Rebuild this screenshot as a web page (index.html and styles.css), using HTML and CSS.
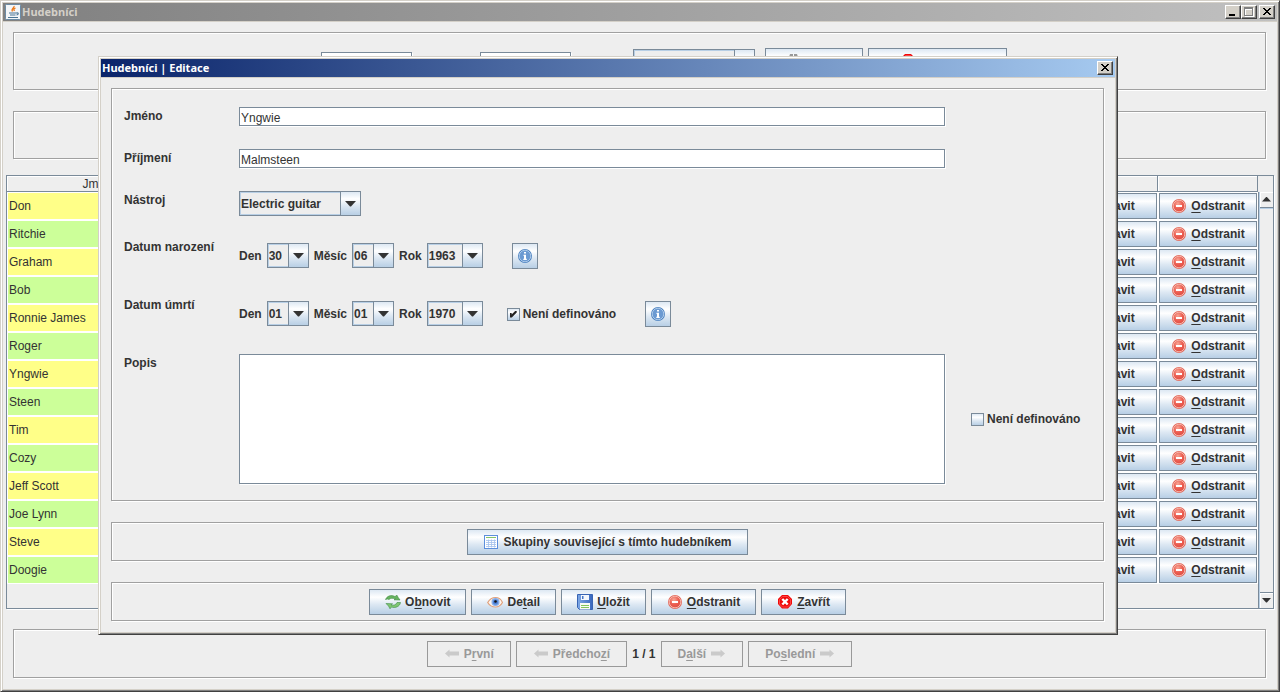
FILE: index.html
```html
<!DOCTYPE html>
<html lang="cs">
<head>
<meta charset="utf-8">
<title>Hudebníci</title>
<link rel="stylesheet" href="styles.css">
</head>
<body>
<svg class="sprite" aria-hidden="true">
  <defs>
    <radialGradient id="red" cx="0.4" cy="0.3" r="0.8"><stop offset="0" stop-color="#f7a595"/><stop offset="0.5" stop-color="#ec5f52"/><stop offset="1" stop-color="#dd4a40"/></radialGradient>
    <linearGradient id="disk" x1="0" x2="1"><stop offset="0" stop-color="#7fa9e6"/><stop offset="1" stop-color="#3766bd"/></linearGradient>
  </defs>
  <symbol id="i-minus" viewBox="0 0 16 16">
    <circle cx="8" cy="8" r="7" fill="#e2685a"/><circle cx="8" cy="8" r="5.8" fill="url(#red)" stroke="#f6b3a8" stroke-width="1"/>
    <rect x="5" y="7" width="6" height="2" fill="#fff"/>
  </symbol>
  <symbol id="i-close" viewBox="0 0 16 16">
    <path d="M5 1h6l4 4v5l-4 4.500H5L1 10V5z" fill="#f00a0a"/><path d="M5.500 2.500h5l3 3v4.500l-3 3h-5l-3-3V5.500z" fill="none" stroke="#ff5a5a" stroke-width=".7"/>
    <path d="M5.300 5l5.400 5.500M10.700 5l-5.400 5.500" stroke="#fff" stroke-width="2.400"/>
  </symbol>
  <symbol id="i-refresh" viewBox="0 0 16 16">
    <path d="M.5 5.500C2 2 6 .5 10 2.500L12 1.200l1 2 2 2.800-6-.2L10.500 5C8 4 5.500 4 4 5.500L2.500 5z" fill="#67b45f" stroke="#3e8a44" stroke-width=".6"/>
    <path d="M15.500 8.500C15 12.500 10 14.500 6.500 13L5 14.800 3.500 12 1 9.500l6.500.3L6 11c3 .5 5 0 6-2.500z" fill="#7fc772" stroke="#3e8a44" stroke-width=".6"/>
  </symbol>
  <symbol id="i-eye" viewBox="0 0 16 16">
    <path d="M.7 8.500C3 4.500 6 3.500 8.500 3.500S14 5 15.500 8.500C13.500 12 11 13 8.500 13S3 12.500.7 8.500z" fill="#fdf6f0" stroke="#e0a17c" stroke-width="1.200"/>
    <circle cx="8.500" cy="8" r="4" fill="#86aee8"/><circle cx="8.500" cy="8" r="2.600" fill="#4f82d8"/><circle cx="8.500" cy="7.500" r="1.300" fill="#111"/>
  </symbol>
  <symbol id="i-save" viewBox="0 0 16 16">
    <path d="M.5.500h15v15h-13l-2-2z" fill="url(#disk)" stroke="#3864b4"/>
    <path d="M4 1h8v5H4z" fill="#f3f7fd"/><path d="M5 2h1.500v3H5z" fill="#4775c6"/>
    <path d="M3 9h10v6.500H3z" fill="#f8fbf4"/><path d="M4 11.500h8M4 13.500h8" stroke="#83c55c"/>
  </symbol>
  <symbol id="i-grid" viewBox="0 0 16 16">
    <rect x="1.500" y="1.500" width="13" height="13" fill="#fff" stroke="#5c8fdc"/>
    <path d="M3 3.500h10" stroke="#86c36b"/>
    <path d="M3 6.500h10M3 8.500h10M3 10.500h10M3 12.500h10" stroke="#b4cdf0"/><path d="M5.500 5.500v8M8.500 5.500v8M11.500 5.500v8" stroke="#a5c2ee" stroke-width=".8"/>
  </symbol>
  <symbol id="i-info" viewBox="0 0 16 16">
    <circle cx="8" cy="8" r="7" fill="#4a80c0"/><circle cx="8" cy="8" r="5.800" fill="#6b9ad2" stroke="#b6d0ec" stroke-width=".9"/>
    <path d="M7 4h2v1.600H7zM6.500 6.800H9v4h.8V12H6.300v-1.200H7V8h-.5z" fill="#fff"/>
  </symbol>
  <symbol id="i-left" viewBox="0 0 16 16"><path d="M1 7.500L5.500 3.500V5.500H15v4H5.500v2z" fill="#cacaca"/></symbol>
  <symbol id="i-right" viewBox="0 0 16 16"><path d="M15 7.500L10.500 3.500V5.500H1v4h9.500v2z" fill="#cacaca"/></symbol>
  <symbol id="i-find" viewBox="0 0 16 16"><path d="M4 1h3v3h1V1h3l3 9v4H9v-4H7v4H1v-4z" fill="#999"/></symbol>
  <symbol id="i-edit" viewBox="0 0 16 16"><path d="M2 14l1-4 8-8 3 3-8 8z" fill="#e6b04a" stroke="#9a6a20"/></symbol>
  <symbol id="i-java" viewBox="0 0 16 16">
    <rect x=".5" y=".5" width="15" height="15" rx="1" fill="#f3f6f8" stroke="#6b8ba4"/>
    <path d="M9 2c1 1.500-3.500 3-1.500 5.500M10.500 4c-2 1-2 1.500-1 3" fill="none" stroke="#ec7a1c" stroke-width="1.300"/>
    <path d="M4 9h7.500M5 11h5.500M3 13.500h10M11.500 9c2.500-.5 2 1.800 0 2" fill="none" stroke="#4a7594" stroke-width="1.200"/>
  </symbol>
  <symbol id="w-close" viewBox="0 0 12 10"><path d="M2 1h2v1h1v1h2V2h1V1h2v1H9v1H8v1H7v1h1v1h1v1h1v1H8V7H7V6H5v1H4v1H2V7h1V6h1V5h1V4H4V3H3V2H2z" fill="#000"/></symbol>
  <symbol id="w-min" viewBox="0 0 12 10"><path d="M2 7h6v2H2z" fill="#000"/></symbol>
  <symbol id="w-max" viewBox="0 0 12 10"><path d="M2 1h9v9H2z" fill="#fff"/><path d="M1 0h9v9H1zM2 2v6h7V2z" fill="#808080" fill-rule="evenodd"/><path d="M3 3h6v5H3z" fill="#d4d0c8"/></symbol>
  <symbol id="i-down" viewBox="0 0 11 6"><path d="M0 0h11L6 5.500H5z" fill="#333"/></symbol>
  <symbol id="i-up" viewBox="0 0 11 6"><path d="M0 5.500h11L6 0H5z" fill="#333"/></symbol>
</svg>

<main class="window main-window">
  <header class="titlebar inactive">
    <svg class="icon"><use href="#i-java"/></svg>
    <h1 class="title">Hudebníci</h1>
    <div class="window-buttons">
      <button class="wbtn" aria-label="Minimalizovat"><svg><use href="#w-min"/></svg></button>
      <button class="wbtn" aria-label="Maximalizovat"><svg><use href="#w-max"/></svg></button>
      <button class="wbtn spaced" aria-label="Zavřít okno"><svg><use href="#w-close"/></svg></button>
    </div>
  </header>
  <div class="main-body">
    <section class="group filter">
      <label class="filter-first" for="f-name">Jméno</label><input class="field short" id="f-name" type="text">
      <label class="filter-second" for="f-surname">Příjmení</label><input class="field short" id="f-surname" type="text">
      <label class="filter-third" for="f-inst">Nástroj</label>
      <span class="combo wide"><select id="f-inst"><option></option></select><span class="arrow"><svg><use href="#i-down"/></svg></span></span>
      <button class="btn filter-find"><svg class="icon"><use href="#i-find"/></svg><span>Hledat</span></button>
      <button class="btn filter-cancel"><svg class="icon"><use href="#i-close"/></svg><span>Zrušit filtr</span></button>
    </section>
    <section class="group spare"></section>
    <section class="list">
      <table class="musicians">
        <thead><tr><th class="c-name">Jméno</th><th></th><th class="c-edit"></th><th class="c-del"></th></tr></thead>
        <tbody>
          <tr><td>Don</td><td></td><td><button class="btn">
            <svg class="icon"><use href="#i-edit"/></svg><span>Upravit</span></button></td><td><button class="btn"><svg class="icon"><use href="#i-minus"/></svg><span><u>O</u>dstranit</span></button></td></tr>
          <tr><td>Ritchie</td><td></td><td><button class="btn">
            <svg class="icon"><use href="#i-edit"/></svg><span>Upravit</span></button></td><td><button class="btn"><svg class="icon"><use href="#i-minus"/></svg><span><u>O</u>dstranit</span></button></td></tr>
          <tr><td>Graham</td><td></td><td><button class="btn">
            <svg class="icon"><use href="#i-edit"/></svg><span>Upravit</span></button></td><td><button class="btn"><svg class="icon"><use href="#i-minus"/></svg><span><u>O</u>dstranit</span></button></td></tr>
          <tr><td>Bob</td><td></td><td><button class="btn">
            <svg class="icon"><use href="#i-edit"/></svg><span>Upravit</span></button></td><td><button class="btn"><svg class="icon"><use href="#i-minus"/></svg><span><u>O</u>dstranit</span></button></td></tr>
          <tr><td>Ronnie James</td><td></td><td><button class="btn">
            <svg class="icon"><use href="#i-edit"/></svg><span>Upravit</span></button></td><td><button class="btn"><svg class="icon"><use href="#i-minus"/></svg><span><u>O</u>dstranit</span></button></td></tr>
          <tr><td>Roger</td><td></td><td><button class="btn">
            <svg class="icon"><use href="#i-edit"/></svg><span>Upravit</span></button></td><td><button class="btn"><svg class="icon"><use href="#i-minus"/></svg><span><u>O</u>dstranit</span></button></td></tr>
          <tr><td>Yngwie</td><td></td><td><button class="btn">
            <svg class="icon"><use href="#i-edit"/></svg><span>Upravit</span></button></td><td><button class="btn"><svg class="icon"><use href="#i-minus"/></svg><span><u>O</u>dstranit</span></button></td></tr>
          <tr><td>Steen</td><td></td><td><button class="btn">
            <svg class="icon"><use href="#i-edit"/></svg><span>Upravit</span></button></td><td><button class="btn"><svg class="icon"><use href="#i-minus"/></svg><span><u>O</u>dstranit</span></button></td></tr>
          <tr><td>Tim</td><td></td><td><button class="btn">
            <svg class="icon"><use href="#i-edit"/></svg><span>Upravit</span></button></td><td><button class="btn"><svg class="icon"><use href="#i-minus"/></svg><span><u>O</u>dstranit</span></button></td></tr>
          <tr><td>Cozy</td><td></td><td><button class="btn">
            <svg class="icon"><use href="#i-edit"/></svg><span>Upravit</span></button></td><td><button class="btn"><svg class="icon"><use href="#i-minus"/></svg><span><u>O</u>dstranit</span></button></td></tr>
          <tr><td>Jeff Scott</td><td></td><td><button class="btn">
            <svg class="icon"><use href="#i-edit"/></svg><span>Upravit</span></button></td><td><button class="btn"><svg class="icon"><use href="#i-minus"/></svg><span><u>O</u>dstranit</span></button></td></tr>
          <tr><td>Joe Lynn</td><td></td><td><button class="btn">
            <svg class="icon"><use href="#i-edit"/></svg><span>Upravit</span></button></td><td><button class="btn"><svg class="icon"><use href="#i-minus"/></svg><span><u>O</u>dstranit</span></button></td></tr>
          <tr><td>Steve</td><td></td><td><button class="btn">
            <svg class="icon"><use href="#i-edit"/></svg><span>Upravit</span></button></td><td><button class="btn"><svg class="icon"><use href="#i-minus"/></svg><span><u>O</u>dstranit</span></button></td></tr>
          <tr><td>Doogie</td><td></td><td><button class="btn">
            <svg class="icon"><use href="#i-edit"/></svg><span>Upravit</span></button></td><td><button class="btn"><svg class="icon"><use href="#i-minus"/></svg><span><u>O</u>dstranit</span></button></td></tr>
        </tbody>
      </table>
      <div class="scrollbar">
        <button class="scroll-btn up" aria-label="Nahoru"><svg><use href="#i-up"/></svg></button>
        <div class="track"></div>
        <button class="scroll-btn down" aria-label="Dolů"><svg><use href="#i-down"/></svg></button>
      </div>
    </section>
    <nav class="group pager">
      <button class="btn" disabled><svg class="icon"><use href="#i-left"/></svg><span>P<u>r</u>vní</span></button>
      <button class="btn" disabled><svg class="icon"><use href="#i-left"/></svg><span>Předcho<u>z</u>í</span></button>
      <span class="page">1 / 1</span>
      <button class="btn" disabled><span>D<u>a</u>lší</span><svg class="icon"><use href="#i-right"/></svg></button>
      <button class="btn" disabled><span>Po<u>s</u>lední</span><svg class="icon"><use href="#i-right"/></svg></button>
    </nav>
  </div>
</main>

<div class="window dialog" role="dialog" aria-labelledby="dialog-title">
  <header class="titlebar active">
    <h2 class="title" id="dialog-title">Hudebníci | Editace</h2>
    <div class="window-buttons"><button class="wbtn" aria-label="Zavřít dialog"><svg><use href="#w-close"/></svg></button></div>
  </header>
  <form class="dialog-body">
    <section class="group form">
      <label for="name">Jméno</label>
      <input class="field" id="name" type="text" value="Yngwie">
      <label for="surname">Příjmení</label>
      <input class="field" id="surname" type="text" value="Malmsteen">
      <label for="inst">Nástroj</label>
      <span class="combo wide"><select id="inst"><option>Electric guitar</option></select><span class="arrow"><svg><use href="#i-down"/></svg></span></span>
      <span class="caption">Datum narození</span>
      <div class="date">
        <label for="bd">Den</label><span class="combo day"><select id="bd"><option>30</option></select><span class="arrow"><svg><use href="#i-down"/></svg></span></span>
        <label for="bm">Měsíc</label><span class="combo day"><select id="bm"><option>06</option></select><span class="arrow"><svg><use href="#i-down"/></svg></span></span>
        <label for="by">Rok</label><span class="combo year"><select id="by"><option>1963</option></select><span class="arrow"><svg><use href="#i-down"/></svg></span></span>
        <button type="button" class="btn info" aria-label="Informace"><svg class="icon"><use href="#i-info"/></svg></button>
      </div>
      <span class="caption">Datum úmrtí</span>
      <div class="date">
        <label for="dd">Den</label><span class="combo day"><select id="dd"><option>01</option></select><span class="arrow"><svg><use href="#i-down"/></svg></span></span>
        <label for="dm">Měsíc</label><span class="combo day"><select id="dm"><option>01</option></select><span class="arrow"><svg><use href="#i-down"/></svg></span></span>
        <label for="dy">Rok</label><span class="combo year"><select id="dy"><option>1970</option></select><span class="arrow"><svg><use href="#i-down"/></svg></span></span>
        <label class="check date-check"><input type="checkbox" checked>Není definováno</label>
        <button type="button" class="btn info" aria-label="Informace"><svg class="icon"><use href="#i-info"/></svg></button>
      </div>
      <label for="desc">Popis</label>
      <textarea id="desc"></textarea>
      <label class="check desc-check"><input type="checkbox">Není definováno</label>
    </section>
    <section class="group actions">
      <button type="button" class="btn"><svg class="icon"><use href="#i-grid"/></svg><span>Skupiny související s tímto hudebníkem</span></button>
    </section>
    <section class="group actions">
      <button type="button" class="btn"><svg class="icon"><use href="#i-refresh"/></svg><span>O<u>b</u>novit</span></button>
      <button type="button" class="btn"><svg class="icon"><use href="#i-eye"/></svg><span>De<u>t</u>ail</span></button>
      <button type="button" class="btn"><svg class="icon"><use href="#i-save"/></svg><span><u>U</u>ložit</span></button>
      <button type="button" class="btn"><svg class="icon"><use href="#i-minus"/></svg><span><u>O</u>dstranit</span></button>
      <button type="button" class="btn"><svg class="icon"><use href="#i-close"/></svg><span><u>Z</u>avřít</span></button>
    </section>
  </form>
</div>
</body>
</html>
```
FILE: styles.css
```css
* { box-sizing: border-box; }

body {
  margin: 0;
  position: relative;
  background: #d4d0c8;
  color: #333;
  font: bold 12px/18px "Liberation Sans", Arial, sans-serif;
}

button, input, select, textarea { font: inherit; color: inherit; margin: 0; border-radius: 0; }

.sprite { position: absolute; width: 0; height: 0; }
.icon { width: 16px; height: 16px; flex: none; }
u { text-underline-offset: 2px; text-decoration-thickness: 1px; }

/* window frames */
.window {
  display: flex;
  flex-direction: column;
  padding: 2px;
  background: #eee;
  border: 1px solid;
  border-color: #d4d0c8 #404040 #404040 #d4d0c8;
  box-shadow: inset 1px 1px #fff, inset -1px -1px #808080, inset 2px 2px #d4d0c8, inset -2px -2px #d4d0c8;
}
.main-window { min-height: 100vh; }
.dialog { position: absolute; top: 56px; left: 98px; right: 162px; }

.titlebar {
  display: flex;
  align-items: center;
  height: 19px;
  padding: 0 2px 0 1px;
  border-bottom: 1px solid #d4d0c8;
}
.inactive { background: linear-gradient(90deg, #808080, #c0c0c0); color: #d4d0c8; padding-left: 2px; gap: 1px; }
.active { background: linear-gradient(90deg, #0a246a, #a6caf0); color: #fff; }
.title { flex: 1; margin: 0; font: bold 11px/18px "Noto Sans", Tahoma, sans-serif; }
.window-buttons { display: flex; }
.wbtn {
  width: 16px;
  height: 14px;
  padding: 1px;
  display: flex;
  background: #d4d0c8;
  border: 1px solid;
  border-color: #fff #404040 #404040 #fff;
  box-shadow: inset -1px -1px #808080;
}
.wbtn svg { width: 12px; height: 10px; }
.spaced { margin-left: 2px; }

/* etched panels */
.group {
  border: 1px solid #a0a0a0;
  box-shadow: 1px 1px #fff, inset 1px 1px #fff;
}

.main-body { flex: 1; display: flex; flex-direction: column; padding: 10px 3px 11px; }
.main-body .group { margin: 0 8px 0 7px; }
.filter { display: flex; align-items: center; justify-content: center; gap: 5px; padding: 15px 0; }
.filter-first { width: 44px; }
.filter-second { width: 58px; }
.filter-third { width: 52px; }
.filter-find { width: 98px; margin-left: 5px; justify-content: flex-start; }
.filter-cancel { width: 139px; justify-content: flex-start; }
.main-body .spare { margin-top: 21px; padding: 23px 0; }

/* musicians list */
.list {
  flex: 1;
  display: flex;
  align-items: flex-start;
  margin: 16px 0 20px;
  border: 1px solid #7a8a99;
  box-shadow: 1px 1px #fff;
}
.musicians { flex: 1; table-layout: fixed; border-collapse: separate; border-spacing: 0; font-weight: normal; }
.musicians th {
  height: 16px;
  padding: 1px 0 0;
  font-weight: normal;
  line-height: 14px;
  border-bottom: 1px solid #7a8a99;
  border-right: 1px solid #7a8a99;
  box-shadow: inset 1px 1px #fff;
}
.c-name { width: 188px; }
.c-edit { width: 108px; }
.c-del { width: 100px; }
.musicians td { height: 28px; padding: 0 1px; border: 1px solid #fff; background: #ff8; }
.musicians tr:nth-child(even) td { background: #cf9; }
.musicians td:nth-child(n+3) { padding: 0; }
.musicians .btn { width: 100%; padding: 0; }

.scrollbar {
  align-self: stretch;
  width: 15px;
  margin-top: 16px;
  display: flex;
  flex-direction: column;
  border-left: 1px solid #7a8a99;
  box-shadow: inset 1px 0 #b8cfe5;
}
.track { flex: 1; margin-left: 1px; border-top: 1px solid #b8cfe5; }
.scroll-btn {
  height: 16px;
  margin-left: 1px;
  padding: 0;
  display: flex;
  align-items: center;
  justify-content: center;
  background: #eee;
  border: 0 solid #7a8a99;
  box-shadow: inset 1px 1px #fff;
}
.scroll-btn svg { width: 9px; height: 5px; }
.up { border-bottom-width: 1px; }
.down { border-top-width: 1px; }

.pager { display: flex; justify-content: center; align-items: center; gap: 5px; padding: 11px 0 10px; }

/* controls */
.btn {
  display: inline-flex;
  align-items: center;
  justify-content: center;
  gap: 4px;
  height: 26px;
  padding: 0 16px;
  font-weight: bold;
  white-space: nowrap;
  border: 1px solid #7a8a99;
  background: linear-gradient(#dde8f3, #fff 30%, #dde8f3 60%, #b8cfe5);
}
.btn:disabled { color: #999; background: #eee; border-color: #999; }

.field {
  height: 19px;
  padding: 2px 1px 0;
  background: #fff;
  border: 1px solid #7a8a99;
  box-shadow: 1px 1px #fff;
  font-weight: normal;
}
.short { width: 91px; }

.combo { display: inline-grid; grid-template-columns: 1fr 20px; height: 25px; border: 1px solid #7a8a99; }
.combo select {
  grid-area: 1 / 1 / 2 / 3;
  min-width: 0;
  padding: 0 20px 0 0;
  appearance: none;
  background: #eee;
  border: 1px solid #b8cfe5;
}
.arrow {
  grid-area: 1 / 2;
  display: flex;
  align-items: center;
  justify-content: center;
  pointer-events: none;
  border-left: 1px solid #7a8a99;
  background: linear-gradient(#dde8f3, #fff 30%, #dde8f3 60%, #b8cfe5);
}
.arrow svg { width: 11px; height: 6px; }
.wide { width: 122px; }
.day { width: 42px; }
.year { width: 56px; }

.check { display: inline-flex; align-items: center; gap: 3px; white-space: nowrap; }
.check input {
  appearance: none;
  flex: none;
  width: 13px;
  height: 13px;
  border: 1px solid #7a8a99;
  background: linear-gradient(#dde8f3, #fff 30%, #dde8f3 60%, #b8cfe5);
}
.check input:checked::after {
  content: "";
  display: block;
  width: 7px;
  height: 7px;
  margin: 2px;
  background: #222;
  clip-path: polygon(0 35%, 28% 35%, 28% 58%, 85% 0, 100% 0, 100% 30%, 30% 100%, 0 100%);
}

/* edit dialog */
.dialog-body { display: flex; flex-direction: column; gap: 21px; padding: 10px 11px 11px 10px; }
.form {
  display: grid;
  grid-template-columns: 89px 1fr 109px;
  column-gap: 26px;
  row-gap: 22px;
  align-items: start;
  padding: 18px 23px 16px 12px;
  white-space: nowrap;
}
.form > * { grid-column: 1; }
.form > .field { grid-column: 2; margin-bottom: 1px; }
.form > .combo { grid-column: 2; }
.form > .date { grid-column: 2 / 4; display: flex; align-items: center; gap: 5px; padding: 5px 0; }
.date .combo { align-self: flex-start; }
.date .info { width: 26px; padding: 0; margin-left: 24px; }
.date-check { margin-left: 19px; }
.form > textarea {
  grid-column: 2;
  width: 100%;
  height: 130px;
  resize: none;
  background: #fff;
  border: 1px solid #7a8a99;
  box-shadow: 1px 1px #fff;
  font-weight: normal;
}
.form > .desc-check { grid-column: 3; align-self: center; }
.actions { display: flex; justify-content: center; gap: 5px; padding: 6px 0 5px; }
.actions .btn { padding: 0 15px; }
```
